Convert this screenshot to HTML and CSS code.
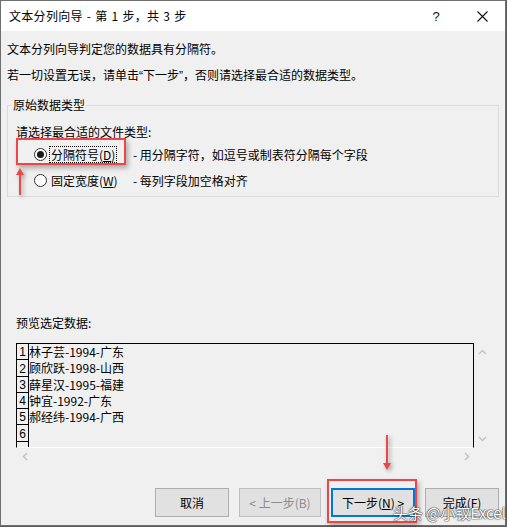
FILE: index.html
```html
<!DOCTYPE html>
<html lang="zh-CN">
<head>
<meta charset="utf-8">
<title>文本分列向导</title>
<link rel="stylesheet" href="styles.css">
</head>
<body>
<div class="window">
  <div class="titlebar">
    <div class="title">文本分列向导 - 第 1 步，共 3 步</div>
    <div class="tb-btn">?</div>
    <div class="tb-btn">
      <svg width="11" height="11" viewBox="0 0 11 11"><path d="M0.5 0.5 L10.5 10.5 M10.5 0.5 L0.5 10.5" stroke="#111" stroke-width="1.1" fill="none"/></svg>
    </div>
  </div>
  <div class="content">
    <p class="line first">文本分列向导判定您的数据具有分隔符。</p>
    <p class="line second">若一切设置无误，请单击<span class="latin">“</span>下一步<span class="latin">”</span>，否则请选择最合适的数据类型。</p>
    <fieldset class="group">
      <legend>原始数据类型</legend>
      <div class="line">请选择最合适的文件类型:</div>
      <div class="option opt1">
        <span class="radio checked"></span>
        <span class="choice"><span class="lbl focus">分隔符号(<u>D</u>)</span></span>
        <span class="desc">- 用分隔字符，如逗号或制表符分隔每个字段</span>
      </div>
      <div class="option opt2">
        <span class="radio"></span>
        <span class="choice"><span class="lbl">固定宽度(<u>W</u>)</span></span>
        <span class="desc">- 每列字段加空格对齐</span>
      </div>
    </fieldset>
    <div class="line preview-label">预览选定数据:</div>
    <div class="preview">
      <div class="box">
        <div class="row"><span class="num">1</span><span class="cell">林子芸-1994-广东</span></div>
        <div class="row"><span class="num">2</span><span class="cell">顾欣跃-1998-山西</span></div>
        <div class="row"><span class="num">3</span><span class="cell">薛星汉-1995-福建</span></div>
        <div class="row"><span class="num">4</span><span class="cell">钟宜-1992-广东</span></div>
        <div class="row"><span class="num">5</span><span class="cell">郝经纬-1994-广西</span></div>
        <div class="row"><span class="num">6</span><span class="cell"></span></div>
        <div class="row"><span class="num"></span><span class="cell"></span></div>
      </div>
      <div class="vscroll">
        <svg width="9" height="6" viewBox="0 0 9 6"><polyline points="1,5 4.5,1.5 8,5" fill="none" stroke="#c4c4c4" stroke-width="1.5"/></svg>
        <svg width="9" height="6" viewBox="0 0 9 6"><polyline points="1,1 4.5,4.5 8,1" fill="none" stroke="#c4c4c4" stroke-width="1.5"/></svg>
      </div>
      <div class="hscroll">
        <svg width="6" height="9" viewBox="0 0 6 9"><polyline points="5,1 1.5,4.5 5,8" fill="none" stroke="#c4c4c4" stroke-width="1.5"/></svg>
        <svg width="6" height="9" viewBox="0 0 6 9"><polyline points="1,1 4.5,4.5 1,8" fill="none" stroke="#c4c4c4" stroke-width="1.5"/></svg>
      </div>
    </div>
    <div class="buttons">
      <button class="btn w74">取消</button>
      <button class="btn w82 disabled">&lt; 上一步(B)</button>
      <button class="btn w84 default">下一步(<u>N</u>) &gt;</button>
      <button class="btn w74">完成(F)</button>
    </div>
  </div>
</div>

<div class="mark mark-radio"></div>
<div class="mark mark-next"></div>
<svg class="arrow arrow-up" width="12" height="28" viewBox="0 0 12 28">
  <path d="M6 0 L10 7 L7 7 L7 27 L5 27 L5 7 L2 7 Z" fill="#ec4646"/>
</svg>
<svg class="arrow arrow-down" width="12" height="36" viewBox="0 0 12 36">
  <path d="M5 0 L7 0 L7 28 L10 28 L6 35 L2 28 L5 28 Z" fill="#ec4646"/>
</svg>
<div class="watermark">头条 @小钗Excel</div>
</body>
</html>
```
FILE: styles.css
```css
* { box-sizing: border-box; }

body {
  margin: 0;
  background: #5c5c5c;
  font-family: "Noto Sans CJK SC", "Microsoft YaHei", sans-serif;
  font-size: 12px;
  color: #000;
}

.window {
  width: 506px;
  height: 526px;
  border: 1px solid #6f6f6f;
  background: #f0f0f0;
  display: flex;
  flex-direction: column;
}

.titlebar {
  height: 30px;
  background: #fff;
  display: flex;
  align-items: center;
  padding-left: 8px;
}

.title {
  flex: 1;
  line-height: 16px;
  font-size: 12px;
  letter-spacing: 0.3px;
  word-spacing: 1px;
}

.tb-btn {
  width: 46px;
  height: 30px;
  display: flex;
  align-items: center;
  justify-content: center;
  font-family: "Segoe UI", "Liberation Sans", sans-serif;
  font-size: 13px;
  color: #111;
}

.content {
  padding: 0 6px;
}

.line {
  margin: 0;
  line-height: 16px;
  white-space: nowrap;
}

.latin {
  font-family: "Liberation Sans", sans-serif;
}

.first { margin-top: 10px; }
.second { margin-top: 10px; }

.group {
  margin: 13px 0 0;
  border: 1px solid #dcdcdc;
  padding: 11px 8px 7px 8px;
  min-width: 0;
}

.group legend {
  margin-left: -4px;
  padding: 0 1px;
  line-height: 16px;
}

.option {
  display: flex;
  align-items: center;
  height: 17px;
}

.opt1 { margin-top: 6px; }
.opt2 { margin-top: 9px; }

.radio {
  width: 13px;
  height: 13px;
  margin-left: 18px;
  border: 1px solid #333;
  border-radius: 50%;
  background: #fff;
  display: flex;
  align-items: center;
  justify-content: center;
  flex: none;
}

.radio.checked::after {
  content: "";
  width: 7px;
  height: 7px;
  border-radius: 50%;
  background: #1a1a1a;
}

.choice {
  width: 86px;
  padding-left: 2px;
  flex: none;
}

.lbl {
  display: inline-block;
  line-height: 15px;
  padding: 0 1px;
  border: 1px solid transparent;
}

.lbl.focus {
  border: 1px dotted #000;
}

.desc {
  line-height: 16px;
  white-space: nowrap;
}

.preview-label {
  margin-top: 118px;
  margin-left: 9px;
}

.preview {
  margin-top: 12px;
  margin-left: 9px;
  display: grid;
  grid-template-columns: 458px 17px;
  grid-template-rows: 105px 16px;
}

.box {
  border: 1px solid #000;
  border-bottom-color: #fff;
  overflow: hidden;
}

.row {
  display: flex;
  height: 16.3px;
}

.num {
  width: 12px;
  flex: none;
  border-right: 1px solid #000;
  border-bottom: 1px solid #000;
  display: flex;
  align-items: flex-end;
  justify-content: center;
  font-family: "Liberation Sans", "Noto Sans", sans-serif;
  font-size: 12px;
  line-height: 12px;
  padding-bottom: 1px;
}

.cell {
  line-height: 15px;
  font-size: 12px;
  white-space: nowrap;
}

.vscroll {
  display: flex;
  flex-direction: column;
  justify-content: space-between;
  align-items: center;
  padding: 6px 0 6px 0;
}

.hscroll {
  display: flex;
  justify-content: space-between;
  align-items: center;
  padding: 0 4px 0 6px;
}

.buttons {
  margin-top: 24px;
  display: flex;
  justify-content: flex-end;
  gap: 10px;
}

.btn {
  height: 29px;
  background: #e1e1e1;
  border: 1px solid #adadad;
  font-family: "Noto Sans CJK SC", "Microsoft YaHei", sans-serif;
  font-size: 12px;
  color: #000;
  padding: 0;
}

.w74 { width: 74px; }
.w82 { width: 82px; }
.w84 { width: 84px; }

.btn.disabled {
  color: #8c8c8c;
  border-color: #bfbfbf;
}

.btn.default {
  border: 2px solid #0078d7;
}

.mark {
  position: absolute;
  border: 2px solid #ec4646;
  box-shadow: 2px 3px 5px rgba(0, 0, 0, 0.3);
}

.mark-radio {
  left: 16px;
  top: 138px;
  width: 110px;
  height: 27px;
}

.mark-next {
  left: 327px;
  top: 479px;
  width: 90px;
  height: 44px;
}

.arrow {
  position: absolute;
  filter: drop-shadow(2px 2px 2px rgba(0, 0, 0, 0.35));
}

.arrow-up {
  left: 14px;
  top: 168px;
}

.arrow-down {
  left: 381px;
  top: 435px;
}

.watermark {
  position: absolute;
  left: 393px;
  top: 503px;
  font-size: 15px;
  line-height: 20px;
  color: #fff;
  text-shadow: 0 0 1px #333, 0 0 1px #333, 0 0 2px rgba(0,0,0,0.5);
  white-space: nowrap;
}
```
